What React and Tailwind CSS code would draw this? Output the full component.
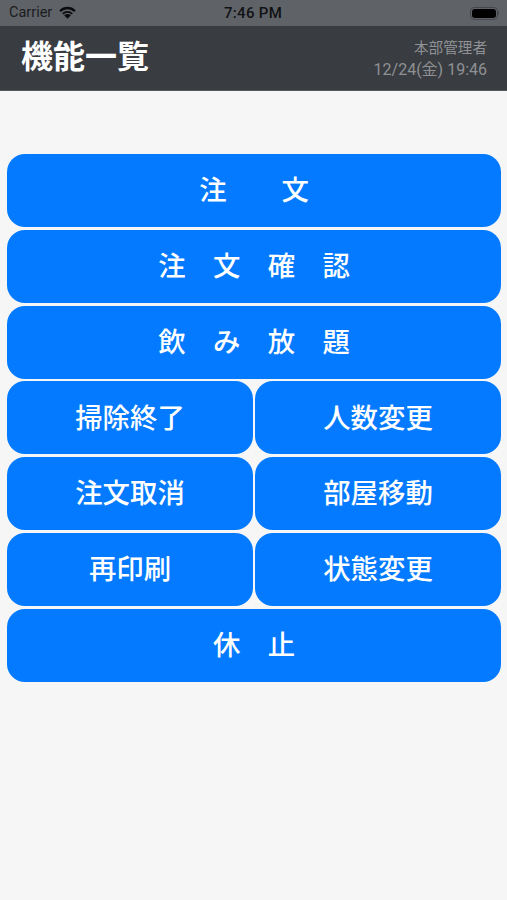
import React from "react";

const jp = "font-['Noto_Sans_CJK_JP','Liberation_Sans',sans-serif]";

const rows = [
  ["注　　文"],
  ["注　文　確　認"],
  ["飲　み　放　題"],
  ["掃除終了", "人数変更"],
  ["注文取消", "部屋移動"],
  ["再印刷", "状態変更"],
  ["休　止"],
];

const MenuButton = ({ label }) => (
  <button className="flex-1 h-[73px] pb-[3px] rounded-[18px] bg-[#037aff] text-white text-[27.4px] leading-none font-medium flex items-center justify-center">
    {label}
  </button>
);

const StatusBar = () => (
  <div className="h-[26px] bg-[#5f6368] relative flex items-center justify-between pl-[9px] pr-[8px] font-['Roboto','Liberation_Sans',sans-serif]">
    <div className="flex items-center gap-[6px] text-[#1b1c1e] text-[14.5px]">
      <span>Carrier</span>
      <svg width="19" height="14" viewBox="0 0 18 13" className="mb-[3px]">
        <path d="M9 13 L5.8 9.6 A4.6 4.6 0 0 1 12.2 9.6 Z" fill="#0c0c0e" />
        <path d="M3.9 7.6 A7.4 7.4 0 0 1 14.1 7.6 L12.9 8.9 A5.6 5.6 0 0 0 5.1 8.9 Z" fill="#0c0c0e" />
        <path d="M1.2 4.8 A11.2 11.2 0 0 1 16.8 4.8 L15.3 6.4 A9.1 9.1 0 0 0 2.7 6.4 Z" fill="#0c0c0e" />
      </svg>
    </div>
    <span className="absolute left-[224px] text-[#111214] text-[15px] font-medium tracking-[0.3px]">7:46 PM</span>
    <div className="flex items-center">
      <div className="w-[28px] h-[13px] rounded-[4px] border border-[#44474b] p-[1px] flex">
        <div className="flex-1 bg-black rounded-[3px]" />
      </div>
      <div className="w-[1.5px] h-[4px] bg-[#44474b] rounded-r-sm" />
    </div>
  </div>
);

export default function App() {
  return (
    <div className={`w-[507px] h-[900px] bg-[#f6f6f6] overflow-hidden ${jp}`}>
      <StatusBar />
      <div className="h-[65px] bg-[#393c41] flex items-center justify-between pl-[21px] pr-[20px] border-b border-[#55585c]">
        <h1 className="text-white text-[32px] font-bold leading-none mb-[9px]">機能一覧</h1>
        <div className="flex flex-col items-end text-[#8f9194] text-[14.6px] leading-[23px] mb-[1px]">
          <span>本部管理者</span>
          <span className="font-['Roboto','Noto_Sans_CJK_JP',sans-serif] text-[16px]">12/24(金) 19:46</span>
        </div>
      </div>
      <div className="pl-[7px] pr-[6px] pt-[63px] flex flex-col gap-[2.8px]">
        {rows.map((row) => (
          <div key={row[0]} className="flex gap-[2px]">
            {row.map((label) => (
              <MenuButton key={label} label={label} />
            ))}
          </div>
        ))}
      </div>
    </div>
  );
}
